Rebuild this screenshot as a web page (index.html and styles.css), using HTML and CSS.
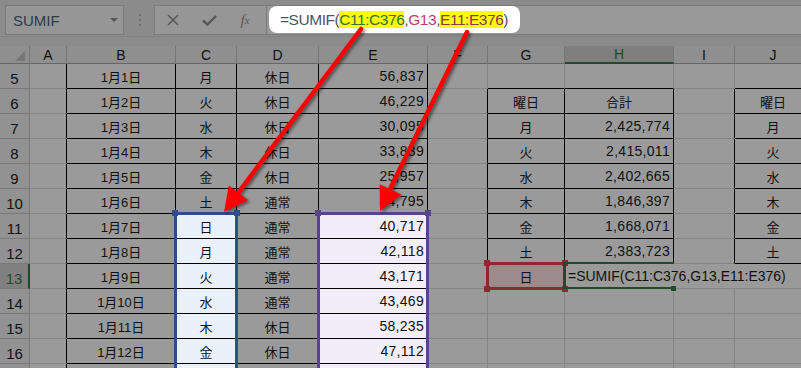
FILE: index.html
```html
<!DOCTYPE html>
<html lang="ja">
<head>
    <meta charset="UTF-8">
    <title>SUMIF</title>
    <link rel="stylesheet" href="styles.css">
</head>
<body>
<div id="app">
    <div class="bar">
        <div class="name">SUMIF<span class="drop"></span></div>
        <div class="dots"><i></i><i></i><i></i></div>
        <div class="btns">
            <span><svg width="12" height="12" viewBox="0 0 12 12"><path d="M1 1L11 11M11 1L1 11" stroke="#585858" stroke-width="1.6" fill="none"/></svg></span>
            <span><svg width="15" height="11" viewBox="0 0 15 11"><path d="M1 5.5L5.5 9.5L14 1" stroke="#585858" stroke-width="2.4" fill="none"/></svg></span>
            <span class="fx">f<small>x</small></span>
        </div>
        <div class="fbar">
            <div class="ftext">=SUMIF(<span class="mk r1">C11:C376</span>,<span class="r2">G13</span>,<span class="mk r3">E11:E376</span>)</div>
        </div>
    </div>

    <div class="wrap">
        <div class="sheet">
            <div class="h cn"><i class="tri"></i></div><div class="h">A</div><div class="h">B</div><div class="h">C</div><div class="h">D</div><div class="h">E</div><div class="h">F</div><div class="h">G</div><div class="h on">H</div><div class="h">I</div><div class="h">J</div>

            <div class="r">5</div><div class="kr"></div><div class="k">1月1日</div><div class="k">月</div><div class="k">休日</div><div class="k n">56,837</div><div></div><div class="kb"></div><div class="kb"></div><div></div><div class="kb"></div>
            <div class="r">6</div><div class="kr"></div><div class="k">1月2日</div><div class="k">火</div><div class="k">休日</div><div class="k n">46,229</div><div class="kr"></div><div class="k">曜日</div><div class="k">合計</div><div class="kr"></div><div class="k">曜日</div>
            <div class="r">7</div><div class="kr"></div><div class="k">1月3日</div><div class="k">水</div><div class="k">休日</div><div class="k n">30,095</div><div class="kr"></div><div class="k">月</div><div class="k n">2,425,774</div><div class="kr"></div><div class="k">月</div>
            <div class="r">8</div><div class="kr"></div><div class="k">1月4日</div><div class="k">木</div><div class="k">休日</div><div class="k n">33,839</div><div class="kr"></div><div class="k">火</div><div class="k n">2,415,011</div><div class="kr"></div><div class="k">火</div>
            <div class="r">9</div><div class="kr"></div><div class="k">1月5日</div><div class="k">金</div><div class="k">休日</div><div class="k n">25,957</div><div class="kr"></div><div class="k">水</div><div class="k n">2,402,665</div><div class="kr"></div><div class="k">水</div>
            <div class="r">10</div><div class="kr"></div><div class="k">1月6日</div><div class="k">土</div><div class="k">通常</div><div class="k n">44,795</div><div class="kr"></div><div class="k">木</div><div class="k n">1,846,397</div><div class="kr"></div><div class="k">木</div>
            <div class="r">11</div><div class="kr"></div><div class="k">1月7日</div><div class="k hb">日</div><div class="k">通常</div><div class="k n hp">40,717</div><div class="kr"></div><div class="k">金</div><div class="k n">1,668,071</div><div class="kr"></div><div class="k">金</div>
            <div class="r">12</div><div class="kr"></div><div class="k">1月8日</div><div class="k hb">月</div><div class="k">通常</div><div class="k n hp">42,118</div><div class="kr"></div><div class="k">土</div><div class="k n">2,383,723</div><div class="kr"></div><div class="k">土</div>
            <div class="r on">13</div><div class="kr"></div><div class="k">1月9日</div><div class="k hb">火</div><div class="k">通常</div><div class="k n hp">43,171</div><div></div><div class="g13">日</div><div class="f o">=SUMIF(C11:C376,G13,E11:E376)</div><div class="o"></div><div class="o"></div>
            <div class="r">14</div><div class="kr"></div><div class="k">1月10日</div><div class="k hb">水</div><div class="k">通常</div><div class="k n hp">43,469</div><div></div><div></div><div></div><div></div><div></div>
            <div class="r">15</div><div class="kr"></div><div class="k">1月11日</div><div class="k hb">木</div><div class="k">休日</div><div class="k n hp">58,235</div><div></div><div></div><div></div><div></div><div></div>
            <div class="r">16</div><div class="kr"></div><div class="k">1月12日</div><div class="k hb">金</div><div class="k">休日</div><div class="k n hp">47,112</div><div></div><div></div><div></div><div></div><div></div>
            <div class="r"></div><div class="kr"></div><div class="k"></div><div class="k hb"></div><div class="k"></div><div class="k hp"></div><div></div><div></div><div></div><div></div><div></div>
        </div>

        <!-- 参照範囲の枠 -->
        <div class="sel blue"><b class="tl"></b><b class="tr"></b></div>
        <div class="sel purple"><b class="tl"></b><b class="tr"></b></div>
        <div class="sel red"><b class="tl"></b><b class="tr"></b><b class="bl"></b><b class="br"></b></div>
        <div class="edit"><b class="fh"></b></div>
    </div>

    <svg class="arrows" width="801" height="368" viewBox="0 0 801 368">
        <g stroke="#ff0000" stroke-width="4.5" stroke-linecap="round" fill="#ff0000">
            <line x1="361" y1="29" x2="238" y2="193"/>
            <polygon stroke="none" points="224,212 248,200 228.8,185.6"/>
            <line x1="467" y1="32" x2="390" y2="189"/>
            <polygon stroke="none" points="380,211 401.3,194.6 379.7,184.2"/>
        </g>
    </svg>
</div>
</body>
</html>
```

FILE: styles.css
```css
*{
    margin: 0;
    padding: 0;
}
html, body{
    overflow: hidden;
}
body{
    background: #8b8b8b;
    font-family: "Liberation Sans", "Noto Sans CJK JP", sans-serif;
    color: #111;
}
#app{
    position: relative;
    width: 801px;
    height: 368px;
    overflow: hidden;
}

/* 数式バー */
.bar{
    display: flex;
    height: 37px;
    padding: 5px 0 0 5px;
    box-sizing: border-box;
    border-bottom: 1px solid #828282;
}
.name{
    width: 119px;
    height: 30px;
    box-sizing: border-box;
    background: #969696;
    border: 1px solid #7b7b7b;
    display: flex;
    align-items: center;
    justify-content: space-between;
    padding: 0 5px 0 7px;
    font-size: 15px;
    color: #2c3b4e;
}
.drop{
    border-left: 4px solid transparent;
    border-right: 4px solid transparent;
    border-top: 4px solid #555;
}
.dots{
    display: flex;
    flex-direction: column;
    gap: 3px;
    margin: 9px 13px 0 15px;
}
.dots i{
    width: 2px;
    height: 2px;
    background: #6c6c6c;
}
.btns{
    width: 113px;
    height: 30px;
    box-sizing: border-box;
    background: #969696;
    border: 1px solid #7b7b7b;
    display: flex;
}
.btns span{
    width: 36px;
    display: flex;
    align-items: center;
    justify-content: center;
}
.fx{
    font-family: "Liberation Serif", serif;
    font-style: italic;
    font-size: 15px;
    color: #585858;
}
.fx small{
    font-size: 11px;
}
.fbar{
    flex: 1;
    height: 30px;
    box-sizing: border-box;
    background: #999;
    border-top: 1px solid #7b7b7b;
    border-bottom: 1px solid #7b7b7b;
}
.ftext{
    width: 251px;
    height: 27px;
    margin-left: 2px;
    box-sizing: border-box;
    background: #fff;
    border-radius: 8px;
    padding-left: 11px;
    line-height: 27px;
    font-size: 15.5px;
    letter-spacing: -0.45px;
    color: #4a5562;
    white-space: nowrap;
}
.mk{
    background: #ffff00;
}
.r1{ color: #35703a; }
.r2{ color: #c23a6c; }
.r3{ color: #84384f; }

/* シート */
.wrap{
    position: relative;
    margin-top: 9px;
}
.sheet{
    display: grid;
    grid-template-columns: 30px 37px 109px 61px 82px 109px 60px 77px 109px 61px 77px;
    grid-template-rows: 18px;
    grid-auto-rows: 25px;
    width: 812px;
    background: #9a9a9a;
}
.sheet > div{
    box-sizing: border-box;
    border-right: 1px solid #858585;
    border-bottom: 1px solid #858585;
    display: flex;
    align-items: center;
    justify-content: center;
    font-size: 13px;
    white-space: nowrap;
}
.sheet > .h{
    background: #8f8f8f;
    border-right-color: #777;
    border-bottom-color: #666;
    font-size: 14px;
}
.sheet > .cn{
    justify-content: flex-end;
    align-items: flex-end;
    padding: 0 4px 2px 0;
}
.tri{
    border-left: 10px solid transparent;
    border-bottom: 10px solid #767676;
}
.sheet > .r{
    background: #929292;
    border-right-color: #7a7a7a;
    border-bottom-color: #7a7a7a;
    align-items: flex-end;
    padding-bottom: 1px;
    font-size: 15px;
}
.sheet > .h.on{
    background: #7f7f7f;
    color: #1d4b2c;
    border-bottom: 2px solid #1d4b2c;
}
.sheet > .r.on{
    background: #808080;
    color: #1d4b2c;
    border-right: 2px solid #1d4b2c;
}
.sheet > .k{
    border-right-color: #000;
    border-bottom-color: #000;
}
.sheet > .kr{
    border-right-color: #000;
}
.sheet > .kb{
    border-bottom-color: #000;
}
.sheet > .n{
    justify-content: flex-end;
    padding-right: 3px;
    font-size: 14px;
    letter-spacing: 0.3px;
}
.sheet > .hb{
    background: #eaf1fb;
}
.sheet > .hp{
    background: #f1eef8;
}
.sheet > .g13{
    background: #9c8a8c;
}
.sheet > .f{
    justify-content: flex-start;
    padding-left: 3px;
    font-size: 14px;
}
.sheet > .o{
    border-right: 0;
}

/* 範囲の枠 */
.sel{
    position: absolute;
    box-sizing: border-box;
    border: 3px solid currentColor;
}
.sel b, .edit b{
    position: absolute;
    width: 6px;
    height: 6px;
    background: currentColor;
}
.sel .tl{ left: -5px; top: -5px; }
.sel .tr{ right: -5px; top: -5px; }
.sel .bl{ left: -5px; bottom: -5px; }
.sel .br{ right: -5px; bottom: -5px; }
.blue{
    color: #2c4f8c;
    left: 174px;
    top: 166px;
    width: 64px;
    height: 220px;
    border-radius: 2px;
}
.purple{
    color: #574585;
    left: 317px;
    top: 166px;
    width: 112px;
    height: 220px;
    border-radius: 2px;
}
.red{
    color: #8b2a2e;
    left: 486px;
    top: 216px;
    width: 80px;
    height: 28px;
}
.edit{
    position: absolute;
    color: #1d4b2c;
    left: 563px;
    top: 216px;
    width: 111px;
    height: 27px;
    box-sizing: border-box;
    border-left: 3px solid currentColor;
    border-top: 2px solid currentColor;
    border-bottom: 2px solid currentColor;
}
.edit .fh{
    width: 5px;
    height: 5px;
    right: -2px;
    bottom: -4px;
}

.arrows{
    position: absolute;
    left: 0;
    top: 0;
    filter: drop-shadow(2px 2px 1.5px rgba(0,0,0,0.45));
}
```
